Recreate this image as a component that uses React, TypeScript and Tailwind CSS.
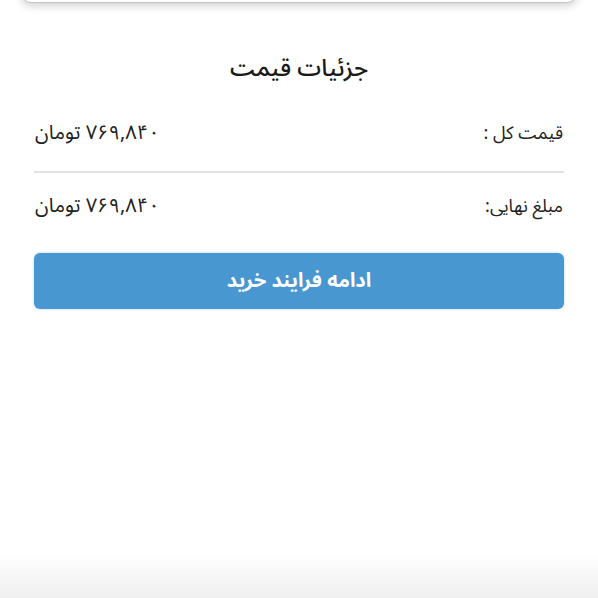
import React from "react";

export default function App() {
  const font = { fontFamily: '"Noto Sans Arabic", "Vazirmatn", "DejaVu Sans", "Noto Sans", sans-serif' };
  return (
    <div
      className="relative w-[598px] h-[598px] overflow-hidden bg-white"
      style={font}
      dir="rtl"
    >
      <div className="mx-[21px] mt-[-40px] h-[43px] rounded-b-[10px] border border-[#c4c4c4] bg-white shadow-[0_3px_8px_rgba(0,0,0,0.18)]" />
      <div className="px-[34px]">
        <div className="mt-[51px] h-[30px] flex items-center justify-center text-[24px] font-medium text-[#1a1a1a]">
          جزئیات قیمت
        </div>
        <div className="mt-[34px] flex items-center justify-between h-[30px] px-[1px] text-[#222]">
          <span className="text-[18px]">قیمت کل :</span>
          <span className="text-[20px]">۷۶۹,۸۴۰ تومان</span>
        </div>
        <div className="mt-[23px] h-[2px] bg-[#e2e2e2]" />
        <div className="mt-[18px] flex items-center justify-between h-[30px] px-[1px] text-[#222]">
          <span className="text-[18px]">مبلغ نهایی:</span>
          <span className="text-[20px]">۷۶۹,۸۴۰ تومان</span>
        </div>
        <button className="mt-[32px] w-full h-[56px] rounded-[6px] bg-[#4897d0] text-white text-[20px] font-bold flex items-center justify-center shadow-[0_0_3px_rgba(72,151,208,0.4)]">
          ادامه فرایند خرید
        </button>
      </div>
      <div className="absolute left-0 right-0 bottom-0 h-[45px] bg-gradient-to-b from-[rgba(240,240,240,0)] to-[#efefef]" />
    </div>
  );
}
